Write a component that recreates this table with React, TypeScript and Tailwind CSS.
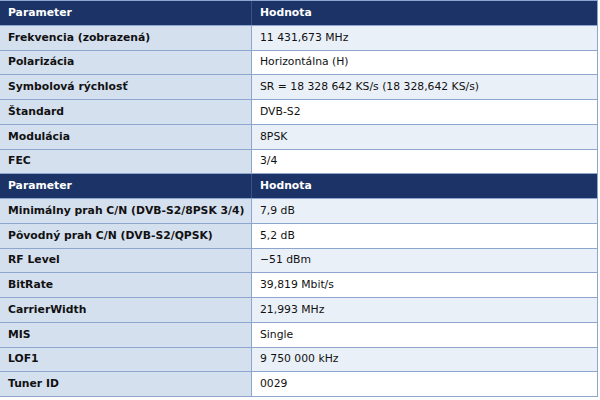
import React from "react";

// Two stacked sections of parameter/value pairs, sharing one table
const sections: [string, string][][] = [
  [
    ["Frekvencia (zobrazená)", "11 431,673 MHz"],
    ["Polarizácia", "Horizontálna (H)"],
    ["Symbolová rýchlosť", "SR = 18 328 642 KS/s (18 328,642 KS/s)"],
    ["Štandard", "DVB-S2"],
    ["Modulácia", "8PSK"],
    ["FEC", "3/4"],
  ],
  [
    ["Minimálny prah C/N (DVB-S2/8PSK 3/4)", "7,9 dB"],
    ["Pôvodný prah C/N (DVB-S2/QPSK)", "5,2 dB"],
    ["RF Level", "−51 dBm"],
    ["BitRate", "39,819 Mbit/s"],
    ["CarrierWidth", "21,993 MHz"],
    ["MIS", "Single"],
    ["LOF1", "9 750 000 kHz"],
    ["Tuner ID", "0029"],
  ],
];

const HeaderRow: React.FC = () => (
  <div className="grid grid-cols-[252px_1fr] h-[24.75px] bg-[#1b3366] text-white font-bold border-b border-[#8ea5cd]">
    <div className="flex items-center pl-2 border-r border-[#3a5488]">Parameter</div>
    <div className="flex items-center pl-2">Hodnota</div>
  </div>
);

const App: React.FC = () => {
  return (
    <div
      className="w-[600px] h-[400px] overflow-hidden bg-white text-[10.8px] text-[#111]"
      style={{ fontFamily: '"DejaVu Sans", sans-serif' }}
    >
      <div className="w-[599px] -ml-px border-t border-[#7d8aa3] border-x border-[#8ea5cd]">
        {sections.map((rows, s) => (
          <div key={s}>
            <HeaderRow />
            {rows.map(([param, value], i) => (
              <div
                key={param}
                className="grid grid-cols-[252px_1fr] h-[24.75px] border-b border-[#8ea5cd]"
              >
                <div className="flex items-center pl-2 font-bold whitespace-nowrap bg-[#d5e0ef] border-r border-[#8ea5cd]">
                  {param}
                </div>
                <div
                  className={
                    "flex items-center pl-2 " + (i % 2 === 0 ? "bg-[#eaf0f8]" : "bg-white")
                  }
                >
                  {value}
                </div>
              </div>
            ))}
          </div>
        ))}
      </div>
    </div>
  );
};

export default App;
